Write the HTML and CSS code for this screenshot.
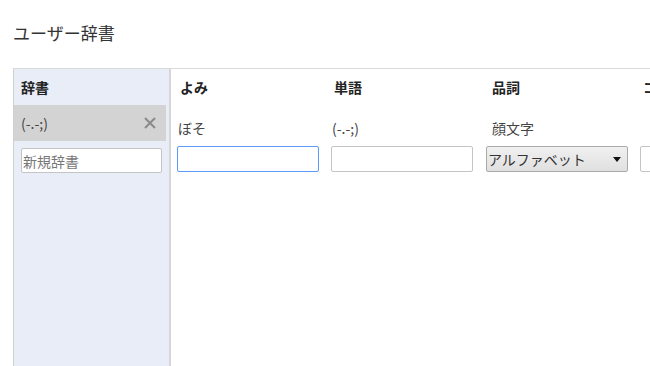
FILE: index.html
```html
<!DOCTYPE html>
<html lang="ja">
<head>
  <meta charset="UTF-8" />
  <meta name="viewport" content="width=device-width, initial-scale=1.0"/>
  <title>ユーザー辞書</title>
  <link rel="stylesheet" href="styles.css">
</head>
<body>
  <div class="page">
    <h1>ユーザー辞書</h1>

    <div class="editor">
      <div class="dict-list">
        <div class="dict-head">辞書</div>
        <div class="dict-item selected">
          <span>(-.-;)</span>
          <svg class="remove" width="12" height="12" viewBox="0 0 12 12">
            <path d="M1 1 L11 11 M11 1 L1 11" stroke="#8a8a8a" stroke-width="2"/>
          </svg>
        </div>
        <input class="new-dict" type="text" placeholder="新規辞書" />
      </div>

      <div class="entries">
        <div class="col-head">よみ</div>
        <div class="col-head">単語</div>
        <div class="col-head pos">品詞</div>
        <div class="col-head">コメント</div>

        <div class="cell">ぼそ</div>
        <div class="cell">(-.-;)</div>
        <div class="cell pos">顔文字</div>
        <div class="cell"></div>

        <div class="field"><input type="text" class="focused" /></div>
        <div class="field"><input type="text" /></div>
        <div class="field">
          <div class="select-wrap">
            <select>
              <option>アルファベット</option>
              <option>顔文字</option>
              <option>名詞</option>
            </select>
          </div>
        </div>
        <div class="field"><input type="text" /></div>
      </div>
    </div>
  </div>
</body>
</html>
```

FILE: styles.css
```css
html, body {
  margin: 0;
  height: 100%;
  overflow: hidden;
}

body {
  font-family: "Noto Sans CJK JP", "Noto Sans", sans-serif;
  color: #333;
  background: #fff;
}

.page {
  padding-left: 13px;
  height: 100%;
  display: flex;
  flex-direction: column;
}

h1 {
  font-size: 17px;
  font-weight: normal;
  line-height: 24px;
  margin: 21px 0 23px 0;
  color: #333;
}

.editor {
  flex: 1;
  display: flex;
  border-top: 1px solid #dadada;
}

/* left column: dictionaries */
.dict-list {
  width: 155px;
  flex-shrink: 0;
  background: #e8edf8;
  border-left: 1px solid #d0d0d0;
  border-right: 2px solid #d6d6d6;
}

.dict-head {
  height: 36px;
  line-height: 36px;
  padding-left: 7px;
  font-size: 14px;
  font-weight: 700;
  color: #222;
}

.dict-item {
  height: 36px;
  margin-right: 3px;
  padding: 0 10px 0 7px;
  display: flex;
  align-items: center;
  justify-content: space-between;
  font-size: 14px;
  color: #444;
}

.dict-item.selected {
  background: #d3d3d3;
}

.new-dict {
  display: block;
  box-sizing: border-box;
  width: 141px;
  height: 25px;
  margin: 7px 0 0 7px;
  padding: 0 1px;
  font-family: inherit;
  font-size: 14px;
  border: 1px solid #c4c4c4;
  border-radius: 2px;
  background: #fff;
}

.new-dict::placeholder {
  color: #777;
}

/* right side: entries table */
.entries {
  display: grid;
  grid-template-columns: 154px 155px 154px 154px;
  grid-template-rows: 36px 41px 26px;
  align-content: start;
}

.col-head {
  padding-left: 9px;
  line-height: 36px;
  font-size: 14px;
  font-weight: 700;
  color: #222;
  white-space: nowrap;
}

.cell {
  padding: 13px 0 0 7px;
  line-height: 20px;
  font-size: 14px;
  color: #444;
  white-space: nowrap;
}

.col-head.pos,
.cell.pos {
  padding-left: 12px;
}

.field {
  padding-left: 6px;
}

.field input {
  box-sizing: border-box;
  width: 142px;
  height: 26px;
  border: 1px solid #c4c4c4;
  border-radius: 2px;
  background: #fff;
  font-family: inherit;
  font-size: 14px;
  outline: none;
}

.field input.focused {
  border-color: #5a9af8;
}

.select-wrap {
  position: relative;
  width: 142px;
}

.select-wrap select {
  -webkit-appearance: none;
  appearance: none;
  box-sizing: border-box;
  width: 142px;
  height: 26px;
  padding: 0 0 0 1px;
  border: 1px solid #aaa;
  border-radius: 2px;
  background: linear-gradient(#f0f0f0, #e0e0e0);
  font-family: inherit;
  font-size: 14px;
  color: #333;
}

.select-wrap::after {
  content: "";
  position: absolute;
  right: 7px;
  top: 11px;
  border-left: 4px solid transparent;
  border-right: 4px solid transparent;
  border-top: 5px solid #111;
  pointer-events: none;
}
```
